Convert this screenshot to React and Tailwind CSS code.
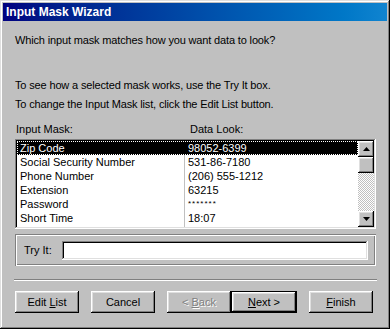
import React from 'react';

const FONT = { fontFamily: '"Liberation Sans", Arial, sans-serif' };

const raised =
  'shadow-[inset_-1px_-1px_#000,inset_1px_1px_#fff,inset_-2px_-2px_#808080,inset_2px_2px_#dfdfdf]';
const sunken =
  'shadow-[inset_-1px_-1px_#fff,inset_1px_1px_#808080,inset_-2px_-2px_#dfdfdf,inset_2px_2px_#000]';
const etched =
  'shadow-[inset_1px_1px_#808080,inset_-1px_-1px_#fff,inset_2px_2px_#fff,inset_-2px_-2px_#808080]';

const rows = [
  ['Zip Code', '98052-6399'],
  ['Social Security Number', '531-86-7180'],
  ['Phone Number', '(206) 555-1212'],
  ['Extension', '63215'],
  ['Password', '*******'],
  ['Short Time', '18:07'],
];

const Arrow = ({ down }) => (
  <svg width="7" height="4" viewBox="0 0 7 4">
    {down ? (
      <path d="M0 0H7L3.5 4Z" fill="#000" />
    ) : (
      <path d="M3.5 0L7 4H0Z" fill="#000" />
    )}
  </svg>
);

const Button = ({ children, disabled, isDefault }) => {
  if (isDefault) {
    return (
      <div className="w-[66px] h-[22px] border border-black">
        <div className={`w-full h-full flex items-center justify-center bg-[#c0c0c0] ${raised}`}>
          {children}
        </div>
      </div>
    );
  }
  return (
    <div
      className={`w-[64px] h-[22px] flex items-center justify-center bg-[#c0c0c0] ${raised} ${
        disabled ? 'text-[#808080] [text-shadow:1px_1px_#fff]' : 'text-black'
      }`}
    >
      {children}
    </div>
  );
};

export default function App() {
  return (
    <div
      style={FONT}
      className="w-[390px] h-[329px] bg-[#c0c0c0] p-[3px] text-[11px] text-black shadow-[inset_-1px_-1px_#000,inset_1px_1px_#dfdfdf,inset_-2px_-2px_#808080,inset_2px_2px_#fff] flex flex-col"
    >
      {/* Title bar */}
      <div className="h-[18px] flex items-center pl-[3px] bg-gradient-to-r from-[#000080] to-[#1084d0]">
        <span className="text-white font-bold text-[12px] leading-none">Input Mask Wizard</span>
      </div>

      <div className="flex flex-col pl-[12px] pr-[11px]">
        <div className="tracking-[-0.15px]">
          <div className="mt-[13px] leading-[13px]">
            Which input mask matches how you want data to look?
          </div>
          <div className="mt-[32px] leading-[13px]">
            To see how a selected mask works, use the Try It box.
          </div>
          <div className="mt-[6px] leading-[13px]">
            To change the Input Mask list, click the Edit List button.
          </div>
        </div>

        <div className="mt-[12px] flex leading-[13px]">
          <div className="w-[175px] pl-[1px]">Input Mask:</div>
          <div>Data Look:</div>
        </div>

        {/* List box */}
        <div className={`mt-[3px] h-[90px] bg-white p-[2px] flex ${sunken}`}>
          <div className="flex-1 flex flex-col overflow-hidden relative">
            <div className="absolute top-0 bottom-0 left-[167px] w-px bg-[#c0c0c0]" />
            {rows.map(([name, look], i) => (
              <div
                key={name}
                className={`h-[14px] shrink-0 flex items-center leading-none relative ${
                  i === 0 ? 'bg-black text-white outline-1 outline-dotted outline-offset-[-1px] outline-white' : ''
                }`}
              >
                <div className="w-[168px] pl-[3px]">{name}</div>
                <div className={`pl-[3px] ${look.startsWith('*') ? 'text-[8px] tracking-[1px]' : ''}`}>
                  {look}
                </div>
              </div>
            ))}
          </div>
          {/* Scrollbar */}
          <div className="w-[16px] flex flex-col">
            <div className={`h-[16px] flex items-center justify-center bg-[#c0c0c0] ${raised}`}>
              <Arrow />
            </div>
            <div className={`h-[16px] bg-[#c0c0c0] ${raised}`} />
            <div className="flex-1 bg-[repeating-conic-gradient(#c0c0c0_0%_25%,#ffffff_0%_50%)] bg-[length:2px_2px]" />
            <div className={`h-[16px] flex items-center justify-center bg-[#c0c0c0] ${raised}`}>
              <Arrow down />
            </div>
          </div>
        </div>

        {/* Try It */}
        <div className={`mt-[5px] h-[32px] flex items-center pl-[9px] pr-[8px] ${etched}`}>
          <span className="w-[38px]">Try It:</span>
          <div className={`flex-1 h-[19px] bg-white ${sunken}`} />
        </div>

        {/* Separator */}
        <div className="mt-[13px] h-[2px] border-t border-[#808080] border-b border-b-white -mx-[1px]" />

        {/* Buttons */}
        <div className="mt-[10px] flex items-center">
          <Button>
            <span>
              Edit <u>L</u>ist
            </span>
          </Button>
          <div className="w-[12px]" />
          <Button>Cancel</Button>
          <div className="w-[12px]" />
          <Button disabled>
            <span>
              &lt; <u>B</u>ack
            </span>
          </Button>
          <Button isDefault>
            <span>
              <u>N</u>ext &gt;
            </span>
          </Button>
          <div className="w-[12px]" />
          <Button>
            <span>
              <u>F</u>inish
            </span>
          </Button>
        </div>
      </div>
    </div>
  );
}
